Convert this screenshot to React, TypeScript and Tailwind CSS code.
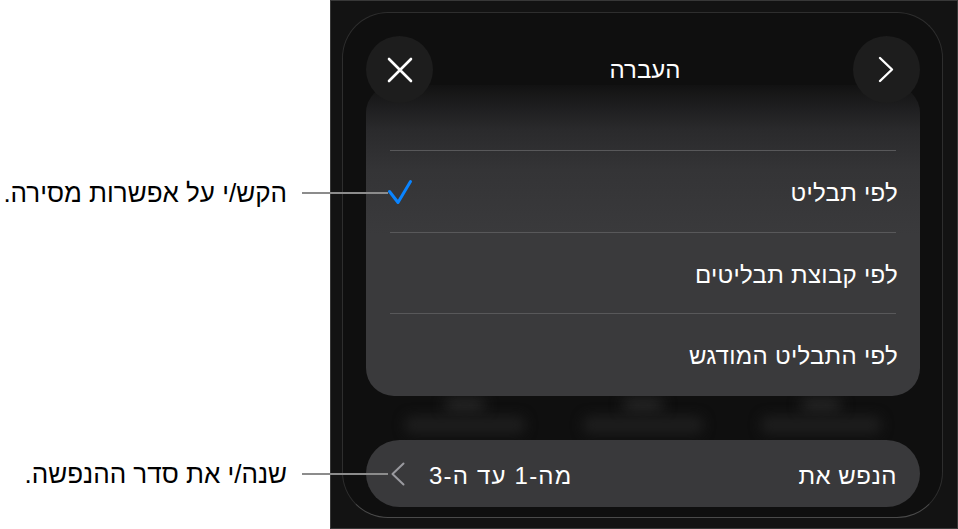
import React from "react";

const font = "font-['Liberation_Sans',Arial,sans-serif]";

function CloseIcon() {
  return (
    <svg width="26" height="26" viewBox="0 0 26 26" fill="none">
      <path d="M2 2 L24 24 M24 2 L2 24" stroke="white" strokeWidth="2.6" strokeLinecap="round" />
    </svg>
  );
}

function ChevronRight() {
  return (
    <svg width="16" height="27" viewBox="0 0 16 27" fill="none">
      <path d="M2 2 L14 13.5 L2 25" stroke="white" strokeWidth="2.4" strokeLinecap="round" strokeLinejoin="round" />
    </svg>
  );
}

function ChevronLeft() {
  return (
    <svg width="14" height="24" viewBox="0 0 14 24" fill="none">
      <path d="M12.5 1.5 L1.5 12 L12.5 22.5" stroke="#9a9a9f" strokeWidth="2" strokeLinecap="round" strokeLinejoin="round" />
    </svg>
  );
}

function Check() {
  return (
    <svg width="26" height="26" viewBox="0 0 26 26" fill="none">
      <path d="M2.5 12.5 L11 23.5 L23.5 2.5" stroke="#0a84ff" strokeWidth="3" strokeLinecap="round" strokeLinejoin="round" />
    </svg>
  );
}

const options = [
  { label: "לפי תבליט", selected: true },
  { label: "לפי קבוצת תבליטים", selected: false },
  { label: "לפי התבליט המודגש", selected: false },
];

function Callout({ top, text }: { top: string; text: string }) {
  return (
    <div className={`absolute left-0 ${top} w-[388px] h-[30px] flex items-center justify-end z-20`}>
      <span dir="rtl" className={`${font} text-[26px] text-black whitespace-nowrap`}>
        {text}
      </span>
      <div className="ml-[15px] w-[86px] h-[2px] bg-[#8c8c8c]" />
    </div>
  );
}

export default function App() {
  return (
    <div className="relative w-[958px] h-[529px] bg-white flex overflow-hidden">
      {/* annotation column */}
      <div className="w-[330px] shrink-0" />
      <Callout top="top-[178px]" text="הקש/י על אפשרות מסירה." />
      <Callout top="top-[459px]" text="שנה/י את סדר ההנפשה." />

      {/* device screen */}
      <div className="flex-1 bg-[#131313] border border-[#383838] pt-[11px] pl-[11px] pr-[14px] pb-[10px]">
        <div className="h-full rounded-[46px] border border-[#2e2e2e] border-b-[#4a4a4a] bg-[#0f0f0f] flex flex-col pt-[23px] pl-[23px] pr-[22px] pb-[8px]">
          {/* header */}
          <div className="relative z-10 h-[67px] shrink-0 flex items-center justify-between">
            <button className="w-[67px] h-[67px] rounded-full bg-[#1d1d1d] flex items-center justify-center">
              <CloseIcon />
            </button>
            <h1 dir="rtl" className={`${font} text-[24px] text-white mr-[-4px]`}>
              העברה
            </h1>
            <button className="w-[67px] h-[67px] rounded-full bg-[#1d1d1d] flex items-center justify-center">
              <ChevronRight />
            </button>
          </div>

          {/* options list */}
          <div className="-mt-[18px] h-[311px] shrink-0 rounded-[28px] bg-[linear-gradient(180deg,#121212_0px,#1c1c1d_18px,#2a2a2c_45px,#343436_85px,#3a3a3c_150px)] px-[24px] flex flex-col">
            <div className="h-[65px] shrink-0" />
            {options.map((o) => (
              <div key={o.label} className="border-t-[1.5px] border-[#58585a] h-[81.5px] shrink-0 flex items-center justify-between" dir="rtl">
                <span className={`${font} text-[24px] text-white -mr-[2px] mt-[4px] tracking-[0.3px]`}>{o.label}</span>
                {o.selected && (
                  <span className="-ml-[3px] mt-[2px]">
                    <Check />
                  </span>
                )}
              </div>
            ))}
          </div>

          {/* content behind the sheet */}
          <div className="h-[44px] shrink-0 flex justify-around items-end pb-[6px] px-[10px] overflow-hidden">
            {[0, 1, 2].map((i) => (
              <div key={i} className="w-[120px] flex flex-col items-center gap-[6px]">
                <div className="w-[40px] h-[10px] rounded-full bg-[#2e2e2e] blur-[7px]" />
                <div className="w-[120px] h-[18px] rounded-md bg-[#1d1d1d] blur-[6px]" />
              </div>
            ))}
          </div>

          {/* animate bar */}
          <div dir="rtl" className="h-[67px] shrink-0 rounded-full bg-[#39393b] flex items-center justify-between pr-[23px] pl-[25px]">
            <span className={`${font} text-[24px] text-white mt-[4px] tracking-[0.5px]`}>הנפש את</span>
            <div className="flex items-center gap-[24px]">
              <span className={`${font} text-[24px] text-white mt-[4px] tracking-[1.2px]`}>מה-1 עד ה-3</span>
              <ChevronLeft />
            </div>
          </div>
        </div>
      </div>
    </div>
  );
}
